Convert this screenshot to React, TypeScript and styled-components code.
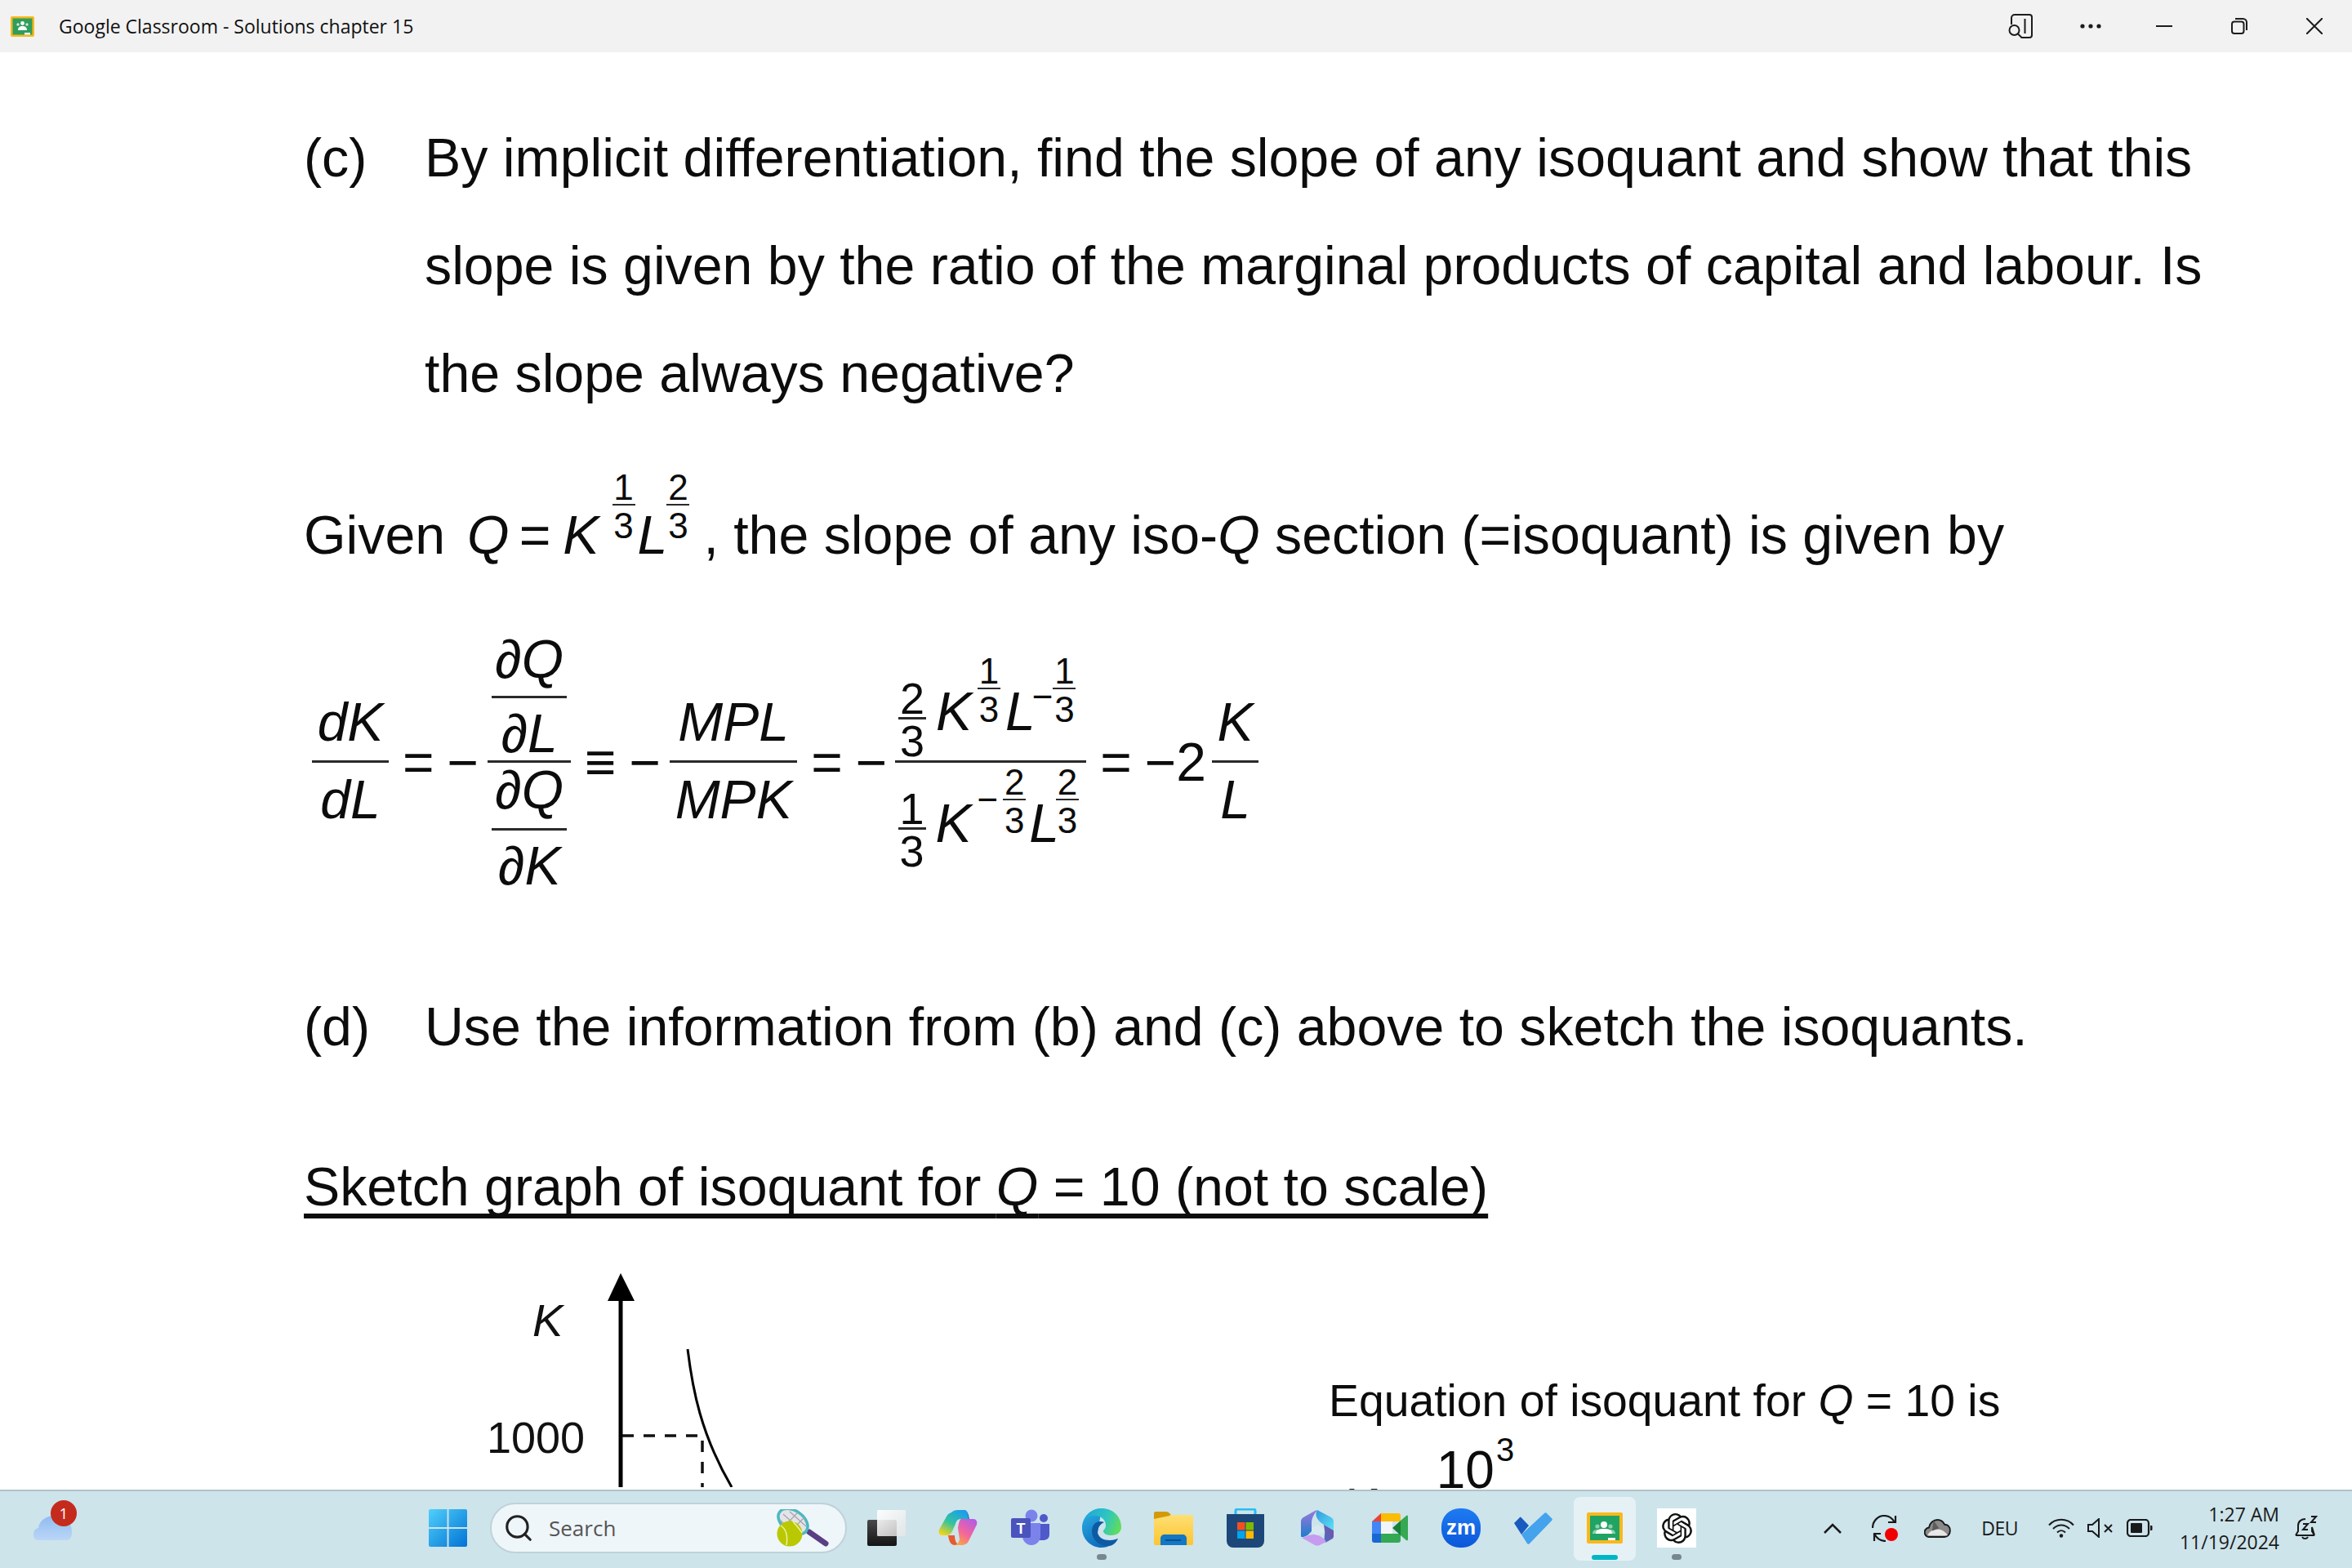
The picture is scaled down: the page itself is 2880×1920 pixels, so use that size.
import * as React from "react";
import styled, { createGlobalStyle } from "styled-components";
import { Search } from "lucide-react";
import { SiOpenai } from "react-icons/si";

const GlobalStyle = createGlobalStyle`
  html, body { margin: 0; padding: 0; background: #fff; }
  #root { width: 2880px; height: 1920px; }
`;

const Page = styled.div`
  width: 2880px;
  height: 1920px;
  display: flex;
  flex-direction: column;
  overflow: hidden;
  font-family: "Liberation Sans", Arial, sans-serif;
  color: #0c0c0c;
`;

/* title bar */
const TitleBar = styled.header`
  height: 64px;
  flex: none;
  background: #f2f2f2;
  display: flex;
  align-items: center;
  padding: 0 36px 0 13px;
  font-family: "Open Sans", sans-serif;
`;

const AppTitle = styled.span`
  margin-left: 30px;
  font-size: 23px;
  color: #111;
`;

const WindowControls = styled.div`
  margin-left: auto;
  display: flex;
  align-items: center;
`;

const WinButton = styled.span<{ $ml: number }>`
  margin-left: ${(p) => p.$ml}px;
  display: flex;
`;

/* document */
const Sheet = styled.main`
  flex: 1;
  min-height: 0;
  overflow: hidden;
  background: #fff;
  padding: 63px 0 0 372px;
  font-size: 66.25px;
`;

const Question = styled.section<{ $mt?: number }>`
  display: grid;
  grid-template-columns: 148px auto;
  margin-top: ${(p) => p.$mt ?? 0}px;
  line-height: 132px;
  white-space: nowrap;
`;

const QuestionLine = styled.div`
  height: 132px;
`;

const MathLine = styled.div<{ $mt: number }>`
  display: flex;
  align-items: flex-end;
  margin-top: ${(p) => p.$mt}px;
  font-size: 66.25px;
  line-height: 66px;
  white-space: pre;
`;

const Formula = styled.div<{ $mt: number }>`
  display: flex;
  align-items: center;
  margin: ${(p) => p.$mt}px 0 0 10px;
  font-size: 66px;
  line-height: 66px;
  white-space: pre;
`;

const Op = styled.span<{ $ml?: number }>`
  margin-left: ${(p) => p.$ml ?? 0}px;
  flex: none;
`;

const Var = styled.i<{ $ml?: number; $mb?: number }>`
  margin-left: ${(p) => p.$ml ?? 0}px;
  margin-bottom: ${(p) => p.$mb ?? 0}px;
  flex: none;
`;

const Plain = styled.span<{ $ml?: number; $mb?: number; $size?: number }>`
  margin-left: ${(p) => p.$ml ?? 0}px;
  margin-bottom: ${(p) => p.$mb ?? 0}px;
  ${(p) => (p.$size ? `font-size: ${p.$size}px; line-height: ${p.$size}px;` : "")}
  flex: none;
`;

const FracBox = styled.span<{
  $w: number;
  $size: number;
  $lh: number;
  $auto?: boolean;
  $ml?: number;
  $mb?: number;
}>`
  display: inline-grid;
  grid-template-rows: ${(p) => (p.$auto ? "auto auto auto" : "1fr auto 1fr")};
  width: ${(p) => p.$w}px;
  flex: none;
  font-size: ${(p) => p.$size}px;
  line-height: ${(p) => p.$lh}px;
  margin-left: ${(p) => p.$ml ?? 0}px;
  margin-bottom: ${(p) => p.$mb ?? 0}px;
`;

const FracNum = styled.span<{ $pad: number }>`
  display: flex;
  justify-content: center;
  align-items: flex-end;
  padding-bottom: ${(p) => p.$pad}px;
`;

const FracDen = styled.span<{ $pad: number }>`
  display: flex;
  justify-content: center;
  align-items: flex-start;
  padding-top: ${(p) => p.$pad}px;
`;

const FracBar = styled.span<{ $h: number }>`
  display: block;
  height: ${(p) => p.$h}px;
  background: #2a2a2a;
`;

const Stack = styled.span<{ $right: number }>`
  display: flex;
  align-items: flex-end;
  padding-right: ${(p) => p.$right}px;
`;

interface FracProps {
  num: React.ReactNode;
  den: React.ReactNode;
  w: number;
  size?: number;
  lh?: number;
  bar?: number;
  numPad?: number;
  denPad?: number;
  auto?: boolean;
  ml?: number;
  mb?: number;
}

const Frac = ({ num, den, w, size = 66, lh = 66, bar = 3, numPad = 14, denPad = 12, auto, ml, mb }: FracProps) => (
  <FracBox $w={w} $size={size} $lh={lh} $auto={auto} $ml={ml} $mb={mb}>
    <FracNum $pad={numPad}>{num}</FracNum>
    <FracBar $h={bar} />
    <FracDen $pad={denPad}>{den}</FracDen>
  </FracBox>
);

const Exp = ({ n, ml, mb }: { n: string; ml: number; mb: number }) => (
  <Frac num={n} den="3" w={28} size={44} lh={38} bar={2} numPad={1} denPad={6} ml={ml} mb={mb} />
);

const Coef = ({ n }: { n: string }) => (
  <Frac num={n} den="3" w={34} size={54} lh={46} bar={3} numPad={0} denPad={3} ml={-3} />
);

const Heading = styled.h2`
  margin: 97px 0 0;
  font-size: 66.3px;
  line-height: 66px;
  font-weight: 400;
  white-space: nowrap;
  text-decoration: underline;
  text-decoration-thickness: 6px;
  text-underline-offset: 10px;
  text-decoration-skip-ink: none;
`;

const GraphRow = styled.section`
  display: flex;
  margin-top: 65px;
  height: 400px;
`;

const GraphSvg = styled.svg`
  width: 1255px;
  height: 270px;
  flex: none;
  overflow: hidden;
`;

const Equation = styled.div`
  padding-top: 134px;
  font-size: 55.3px;
  line-height: 60px;
  white-space: nowrap;
`;

const EquationBody = styled.div`
  display: flex;
  align-items: flex-start;
  font-size: 64px;
  line-height: 62px;
`;

const EqPart = styled.span<{ $ml: number; $mt: number; $size?: number }>`
  margin: ${(p) => p.$mt}px 0 0 ${(p) => p.$ml}px;
  ${(p) => (p.$size ? `font-size: ${p.$size}px; line-height: ${p.$size}px;` : "")}
`;

/* task bar */
const TaskBar = styled.footer`
  height: 96px;
  flex: none;
  box-sizing: border-box;
  border-top: 2px solid #b1c2c8;
  background: #cde4eb;
  display: flex;
  align-items: center;
  padding: 0 42px 4px 41px;
  font-family: "Open Sans", sans-serif;
  color: #1a1a1a;
`;

const Weather = styled.div`
  position: relative;
  width: 47px;
  height: 30px;
  margin-right: 437px;
  flex: none;
`;

const Badge = styled.span`
  position: absolute;
  left: 21px;
  top: -19px;
  width: 32px;
  height: 32px;
  border-radius: 50%;
  background: #c42b1c;
  color: #fff;
  font-size: 19px;
  line-height: 32px;
  text-align: center;
`;

const SearchBox = styled.div`
  width: 437px;
  height: 62px;
  box-sizing: border-box;
  margin-left: 28px;
  flex: none;
  display: flex;
  align-items: center;
  padding: 0 18px 0 14px;
  background: #eff6f9;
  border: 2px solid #bfd2d9;
  border-radius: 31px;
  color: #222;
`;

const SearchLabel = styled.span`
  margin-left: 18px;
  font-size: 26px;
  color: #555;
  flex: 1;
`;

const Slots = styled.div`
  display: flex;
  margin-left: 4px;
`;

const Slot = styled.div<{ $active?: boolean }>`
  position: relative;
  width: 88px;
  height: 92px;
  display: flex;
  align-items: center;
  justify-content: center;
  &::before {
    content: "";
    display: ${(p) => (p.$active ? "block" : "none")};
    position: absolute;
    left: 6px;
    top: 8px;
    width: 76px;
    height: 78px;
    background: #e6f1f6;
    border-radius: 8px;
  }
`;

const SlotIcon = styled.svg`
  position: relative;
  width: 48px;
  height: 48px;
  display: block;
`;

const RunDot = styled.span`
  position: absolute;
  left: 38px;
  top: 78px;
  width: 12px;
  height: 7px;
  border-radius: 4px;
  background: #78878d;
`;

const ActiveBar = styled.span`
  position: absolute;
  left: 28px;
  top: 79px;
  width: 32px;
  height: 6px;
  border-radius: 3px;
  background: #00b6c5;
`;

const ZoomMark = styled.div`
  position: relative;
  width: 48px;
  height: 48px;
  border-radius: 46%;
  background: linear-gradient(#1f7bf2, #0b57d9);
  color: #fff;
  font-family: "Liberation Sans", sans-serif;
  font-size: 26px;
  font-weight: 700;
  line-height: 46px;
  text-align: center;
`;

const GptTile = styled.div`
  width: 48px;
  height: 48px;
  background: #fff;
  color: #111;
  display: flex;
  align-items: center;
  justify-content: center;
  font-size: 37px;
`;

const Tray = styled.div`
  margin-left: auto;
  display: flex;
  align-items: center;
`;

const TrayItem = styled.span<{ $ml: number }>`
  margin-left: ${(p) => p.$ml}px;
  display: flex;
`;

const TrayText = styled.span<{ $ml: number }>`
  margin-left: ${(p) => p.$ml}px;
  font-size: 23px;
  letter-spacing: -0.5px;
  line-height: 30px;
`;

const Clock = styled.div`
  width: 155px;
  text-align: right;
  font-size: 23px;
  line-height: 34px;
`;

const TitleLogo = () => (
  <svg width="29" height="25" viewBox="0 0 29 25">
    <rect width="29" height="25" rx="2" fill="#f9b81a" />
    <rect x="2.5" y="2.5" width="24" height="20" fill="#2f9e5c" />
    <circle cx="14.5" cy="8.5" r="2.4" fill="#fff" />
    <circle cx="9" cy="10" r="1.7" fill="#cfe8d8" />
    <circle cx="20" cy="10" r="1.7" fill="#cfe8d8" />
    <path d="M9 17c0-3.5 2-5 5.5-5s5.5 1.5 5.5 5z" fill="#fff" />
    <rect x="17" y="20" width="7" height="2.5" fill="#fff" />
  </svg>
);

const icon = { fill: "none", stroke: "#1c1c1c", strokeWidth: 2 };

const FindIcon = () => (
  <svg width="32" height="32" viewBox="0 0 32 32" {...icon}>
    <path d="M5 14V6a4 4 0 0 1 4-4h18a3 3 0 0 1 3 3v22a3 3 0 0 1-3 3H17" />
    <path d="M21.5 7v18" />
    <circle cx="8.5" cy="21" r="6" />
    <path d="M13 25.5l4.5 4.5" />
  </svg>
);

const DotsIcon = () => (
  <svg width="26" height="6" viewBox="0 0 26 6" fill="#1c1c1c">
    <circle cx="3" cy="3" r="2.6" />
    <circle cx="13" cy="3" r="2.6" />
    <circle cx="23" cy="3" r="2.6" />
  </svg>
);

const MinimizeIcon = () => (
  <svg width="20" height="20" viewBox="0 0 20 20" {...icon}>
    <path d="M0 10h20" />
  </svg>
);

const RestoreIcon = () => (
  <svg width="20" height="20" viewBox="0 0 20 20" {...icon}>
    <rect x="1" y="4.5" width="14.5" height="14.5" rx="3" />
    <path d="M5 1h9.5A4.5 4.5 0 0 1 19 5.5V15" />
  </svg>
);

const CloseIcon = () => (
  <svg width="20" height="20" viewBox="0 0 20 20" {...icon}>
    <path d="M0 0l20 20M20 0L0 20" />
  </svg>
);

const CloudIcon = () => (
  <svg width="47" height="30" viewBox="0 0 47 30">
    <defs>
      <linearGradient id="cloud" x1="0" y1="0" x2="0" y2="1">
        <stop offset="0" stopColor="#8fbcf0" />
        <stop offset="1" stopColor="#bcd6f7" />
      </linearGradient>
    </defs>
    <path d="M6 30a6 6 0 0 1-6-7c0-4 2-7 6-8 1-8 8-15 20-15 12 0 21 7 21 20 0 4-1 10-6 10z" fill="url(#cloud)" />
  </svg>
);

const StartIcon = () => (
  <svg width="47" height="46" viewBox="0 0 47 46">
    <defs>
      <linearGradient id="win" x1="0" y1="0" x2="1" y2="1">
        <stop offset="0" stopColor="#4fd0fb" />
        <stop offset="1" stopColor="#0272d4" />
      </linearGradient>
    </defs>
    <path d="M2 0h20.5v22H0V2a2 2 0 0 1 2-2zM24.5 0H45a2 2 0 0 1 2 2v20H24.5zM0 24h22.5v22H2a2 2 0 0 1-2-2zM24.5 24H47v20a2 2 0 0 1-2 2H24.5z" fill="url(#win)" />
  </svg>
);

const RacketIcon = () => (
  <svg width="68" height="46" viewBox="0 0 68 46">
    <path d="M42 28l20 14" stroke="#5a3f84" strokeWidth="7" strokeLinecap="round" />
    <ellipse cx="22" cy="15" rx="20" ry="13" transform="rotate(35 22 15)" fill="#e4e4e8" stroke="#4cb8c0" strokeWidth="3.5" />
    <path d="M10 6l22 20M18 3l20 18M6 13l20 20M10 22L28 4M18 28L36 10" stroke="#a4a4ae" strokeWidth="1.2" />
    <circle cx="18" cy="30" r="15.5" fill="#b9c800" />
    <path d="M7 20c6 4 9 12 7 24M22 15c4 5 8 9 11 14" stroke="#eef2a8" strokeWidth="1.5" fill="none" />
  </svg>
);

const TaskViewIcon = () => (
  <SlotIcon viewBox="0 0 48 48">
    <defs>
      <linearGradient id="tv" x1="0" y1="0" x2="0" y2="1">
        <stop offset="0" stopColor="#4a4a4a" />
        <stop offset="1" stopColor="#141414" />
      </linearGradient>
      <linearGradient id="tw" x1="0" y1="0" x2="1" y2="1">
        <stop offset="0" stopColor="#ffffff" stopOpacity="0.95" />
        <stop offset="1" stopColor="#e6e6e6" stopOpacity="0.75" />
      </linearGradient>
    </defs>
    <rect x="1" y="14" width="36" height="32" rx="2" fill="url(#tv)" />
    <rect x="13" y="2" width="36" height="32" rx="1.5" fill="url(#tw)" />
  </SlotIcon>
);

const CopilotIcon = () => (
  <SlotIcon viewBox="0 0 48 48">
    <defs>
      <linearGradient id="cpa" x1="0.8" y1="0" x2="0.2" y2="1">
        <stop offset="0" stopColor="#1a9cf0" />
        <stop offset="0.55" stopColor="#35c49c" />
        <stop offset="1" stopColor="#f2d31a" />
      </linearGradient>
      <linearGradient id="cpb" x1="0.8" y1="0" x2="0.2" y2="1">
        <stop offset="0" stopColor="#b45be5" />
        <stop offset="0.55" stopColor="#f4669a" />
        <stop offset="1" stopColor="#f9a840" />
      </linearGradient>
    </defs>
    <path d="M12 33c1 7 3 12 8 12h6c-4-1-6-6-6-12z" fill="#e85a30" />
    <path d="M31 2c4 0 6 4 7 12h-6z" fill="#1656c0" />
    <path d="M16 5c2-2 4-3 8-3h7c4 0 5 3 6 11h-9c-4 0-6 2-7 6l-4 9c-2 4-4 5-8 5H5c-4 0-5-3-4-7l9-16c2-4 4-4 6-5z" fill="url(#cpa)" />
    <path d="M28 13h15c4 0 5 4 4 7l-9 18c-2 5-5 7-10 7h-9c4 0 6-3 7-7l-2-14c1-6 2-11 4-11z" fill="url(#cpb)" />
  </SlotIcon>
);

const TeamsIcon = () => (
  <SlotIcon viewBox="0 0 48 48">
    <circle cx="41" cy="12" r="5" fill="#5059c9" />
    <path d="M35 19h13v13c0 5-4 7-8 7h-5z" fill="#5059c9" />
    <circle cx="26" cy="9" r="7.5" fill="#7b83eb" />
    <path d="M15 18h22v16c0 6-5 11-11 11s-11-5-11-11z" fill="#7b83eb" />
    <rect x="1" y="12" width="24" height="24" rx="2" fill="#4b53bc" />
    <text x="13" y="31" fontFamily="Liberation Sans" fontWeight="700" fontSize="18" fill="#fff" textAnchor="middle">T</text>
  </SlotIcon>
);

const EdgeIcon = () => (
  <SlotIcon viewBox="0 0 48 48">
    <defs>
      <linearGradient id="eda" x1="0" y1="0.3" x2="1" y2="0.6">
        <stop offset="0" stopColor="#1fa9d9" />
        <stop offset="0.55" stopColor="#2dc5c0" />
        <stop offset="1" stopColor="#62dd5a" />
      </linearGradient>
      <linearGradient id="edb" x1="0" y1="0" x2="0.6" y2="1">
        <stop offset="0" stopColor="#2fb4e8" />
        <stop offset="1" stopColor="#0a66b8" />
      </linearGradient>
    </defs>
    <path d="M24 0C10 0 0 11 0 24c0 14 11 24 24 24 8 0 15-4 20-11-3 1-6 2-10 2-8 0-14-3-15-9z" fill="url(#edb)" />
    <path d="M3 14C7 5 15 0 24 0c14 0 24 10 24 23 0 6-5 10-12 10-5 0-10-2-10-5 0-2 3-3 3-7C29 13 22 9 16 9 10 9 6 11 3 14z" fill="url(#eda)" />
    <path d="M19 30c0-6 3-11 8-13-7-3-15 1-15 11 0 10 8 18 20 18 5 0 9-3 12-9-8 4-22 4-25-7z" fill="#0d5aa3" />
  </SlotIcon>
);

const FolderIcon = () => (
  <SlotIcon viewBox="0 0 48 48">
    <defs>
      <linearGradient id="fol" x1="0" y1="0" x2="0" y2="1">
        <stop offset="0" stopColor="#fedf74" />
        <stop offset="1" stopColor="#fdc530" />
      </linearGradient>
    </defs>
    <path d="M0 6a2 2 0 0 1 2-2h13c2 0 3 1 4 2l3 3v4H0z" fill="#d39a06" />
    <path d="M0 13l19-4 1-1h26a2 2 0 0 1 2 2v33a2 2 0 0 1-2 2H2a2 2 0 0 1-2-2z" fill="url(#fol)" />
    <path d="M8 45V37c0-3 2-5 5-5h22c3 0 5 2 5 5v8z" fill="#1277c4" />
    <rect x="14" y="38" width="19" height="2" fill="#0b4f8a" />
  </SlotIcon>
);

const StoreIcon = () => (
  <SlotIcon viewBox="0 0 48 48">
    <path d="M12 10V3a2 2 0 0 1 2-2h20a2 2 0 0 1 2 2v7" fill="none" stroke="#28bdf2" strokeWidth="3" />
    <path d="M1 7h46v33a8 8 0 0 1-8 8H9a8 8 0 0 1-8-8z" fill="#1c4778" />
    <rect x="14" y="17" width="9.5" height="9.5" fill="#f25022" />
    <rect x="24.5" y="17" width="9.5" height="9.5" fill="#7fba00" />
    <rect x="14" y="27.5" width="9.5" height="9.5" fill="#00a4ef" />
    <rect x="24.5" y="27.5" width="9.5" height="9.5" fill="#ffb900" />
  </SlotIcon>
);

const M365Icon = () => (
  <SlotIcon viewBox="0 0 48 48">
    <defs>
      <linearGradient id="msa" x1="0.5" y1="0" x2="0.5" y2="1">
        <stop offset="0" stopColor="#9b78dc" />
        <stop offset="1" stopColor="#1f7ecb" />
      </linearGradient>
      <linearGradient id="msb" x1="0" y1="0" x2="1" y2="1">
        <stop offset="0" stopColor="#3498dc" />
        <stop offset="1" stopColor="#5be4f7" />
      </linearGradient>
      <linearGradient id="msc" x1="1" y1="0" x2="0" y2="1">
        <stop offset="0" stopColor="#7a4fa8" />
        <stop offset="1" stopColor="#4a6fc0" />
      </linearGradient>
    </defs>
    <path d="M21 3L7 11c-2 1-3 3-3 5v18c0 2 4 1 8-1l5-5V18c0-6 3-11 7-16z" fill="url(#msa)" />
    <path d="M24 2l17 9c2 1 3 3 3 5v11L32 20C24 15 20 8 24 2z" fill="url(#msb)" />
    <path d="M32 20l12 7v7c0 2-1 3-3 4l-7 4c-3-4 0-10-1-15z" fill="url(#msc)" />
    <path d="M5 36l16 9c2 1 4 1 6 0l8-4c-3-5-9-9-15-9-6 0-11 3-15 4z" fill="#c59cf0" />
    <path d="M24 20l8 4v5l-8 4-7-4v-5z" fill="#d6e9ef" />
  </SlotIcon>
);

const MeetIcon = () => (
  <SlotIcon viewBox="0 0 48 48">
    <path d="M14 6v10H3z" fill="#ea4335" />
    <path d="M14 6h21a3 3 0 0 1 3 3v7H14z" fill="#fbbc04" />
    <rect x="3" y="16" width="11" height="15" fill="#4285f4" />
    <rect x="14" y="16" width="14" height="15" fill="#f1f5f8" />
    <path d="M3 31h11v11H6a3 3 0 0 1-3-3z" fill="#1967d2" />
    <path d="M14 31h24v8a3 3 0 0 1-3 3H14z" fill="#34a853" />
    <path d="M28 24l10-9v18z" fill="#188038" />
    <path d="M38 15l7-6c1-1 2 0 2 1v28c0 1-1 2-2 1l-7-6z" fill="#34a853" />
  </SlotIcon>
);

const TodoIcon = () => (
  <SlotIcon viewBox="0 0 48 48">
    <path d="M1 18l7-7a1 1 0 0 1 1.5 0L19 21l-9 11z" fill="#185abd" />
    <path d="M10 32L38 6a2 2 0 0 1 3 0l6 6a2 2 0 0 1 0 3L20 43a2 2 0 0 1-3 0z" fill="#45a2ec" />
  </SlotIcon>
);

const ClassroomIcon = () => (
  <SlotIcon viewBox="0 0 48 48">
    <rect x="2" y="5" width="44" height="38" rx="2" fill="#f9b81a" />
    <rect x="6" y="9" width="36" height="30" fill="#1fa463" />
    <circle cx="23" cy="20" r="4" fill="#fff" />
    <circle cx="15" cy="22" r="2.6" fill="#8fd1ad" />
    <circle cx="31" cy="22" r="2.6" fill="#8fd1ad" />
    <path d="M9 31c0-4 3-5 6-5s6 1 6 5zM25 31c0-4 3-5 6-5s6 1 6 5z" fill="#8fd1ad" />
    <path d="M13 31c0-5 4-6 10-6s10 1 10 6z" fill="#fff" />
    <rect x="28" y="36" width="9" height="3" fill="#fff" />
  </SlotIcon>
);

const ChevronIcon = () => (
  <svg width="22" height="13" viewBox="0 0 22 13" fill="none" stroke="#1a1a1a" strokeWidth="2.5">
    <path d="M1 12L11 2l10 10" />
  </svg>
);

const SyncIcon = () => (
  <svg width="32" height="33" viewBox="0 0 32 33" fill="none" stroke="#1a1a1a" strokeWidth="2.2">
    <path d="M1 16C1 7 8 1 15 1c6 0 10 3 13 8" />
    <path d="M29 1v8h-9" />
    <path d="M3 32v-9h8" />
    <path d="M3 23c3 6 8 9 14 9" />
    <circle cx="24" cy="24" r="8" fill="#f00000" stroke="none" />
  </svg>
);

const OneDriveIcon = () => (
  <svg width="33" height="23" viewBox="0 0 34 24">
    <path d="M7 23a6 6 0 0 1-1-12c1-6 6-10 11-10 4 0 7 2 9 6 4 0 7 3 7 8 0 4-3 8-7 8z" fill="#8a8a8a" stroke="#1a1a1a" strokeWidth="2" />
    <path d="M4 21c3-6 8-8 13-8 5 0 10 3 13 8z" fill="#e8e8e8" />
    <path d="M12 2l7 10-9 3z" fill="#5c5c5c" />
  </svg>
);

const WifiIcon = () => (
  <svg width="32" height="24" viewBox="0 0 32 24" fill="none" stroke="#1a1a1a" strokeWidth="2">
    <path d="M1 8.5C9-.5 23-.5 31 8.5" />
    <path d="M6 13c6-6 14-6 20 0" />
    <path d="M11 17.5c3-3 7-3 10 0" />
    <circle cx="16" cy="21.5" r="2.2" fill="#1a1a1a" stroke="none" />
  </svg>
);

const MuteIcon = () => (
  <svg width="32" height="24" viewBox="0 0 32 24" fill="none" stroke="#1a1a1a" strokeWidth="2">
    <path d="M1 8h5l8-7v22l-8-7H1z" />
    <path d="M21 8l9 9M30 8l-9 9" />
  </svg>
);

const BatteryIcon = () => (
  <svg width="32" height="22" viewBox="0 0 32 22" fill="none" stroke="#1a1a1a" strokeWidth="2.2">
    <rect x="1" y="1" width="26" height="20" rx="4" />
    <rect x="5" y="5" width="14" height="12" rx="1" fill="#1a1a1a" stroke="none" />
    <path d="M29 8h1.5a1 1 0 0 1 1 1v4a1 1 0 0 1-1 1H29z" fill="#1a1a1a" stroke="none" />
  </svg>
);

const SnoozeIcon = () => (
  <svg width="28" height="30" viewBox="0 0 28 30" fill="none" stroke="#1a1a1a" strokeWidth="2">
    <path d="M1 24l3-5v-7C4 7 8 4 13 4M21 14v5l3 5z" />
    <path d="M1 24h23" />
    <path d="M9 26a4 4 0 0 0 7 0" />
    <path d="M20 1h6l-6 7h6M10 10h6l-6 7h6" />
  </svg>
);

const App = () => (
  <Page>
    <GlobalStyle />
    <TitleBar>
      <TitleLogo />
      <AppTitle>Google Classroom - Solutions chapter 15</AppTitle>
      <WindowControls>
        <WinButton $ml={0}><FindIcon /></WinButton>
        <WinButton $ml={57}><DotsIcon /></WinButton>
        <WinButton $ml={67}><MinimizeIcon /></WinButton>
        <WinButton $ml={72}><RestoreIcon /></WinButton>
        <WinButton $ml={72}><CloseIcon /></WinButton>
      </WindowControls>
    </TitleBar>

    <Sheet>
      <Question>
        <span>(c)</span>
        <div>
          <QuestionLine>By implicit differentiation, find the slope of any isoquant and show that this</QuestionLine>
          <QuestionLine>slope is given by the ratio of the marginal products of capital and labour. Is</QuestionLine>
          <QuestionLine>the slope always negative?</QuestionLine>
        </div>
      </Question>

      <MathLine $mt={50}>
        <Plain>Given</Plain>
        <Var $ml={27}>Q</Var>
        <Op $ml={12}>=</Op>
        <Var $ml={15}>K</Var>
        <Exp n="1" ml={16} mb={25} />
        <Var $ml={3}>L</Var>
        <Exp n="2" ml={-1} mb={25} />
        <Plain $ml={17}>, the slope of any iso-</Plain>
        <Var>Q</Var>
        <Plain> section (=isoquant) is given by</Plain>
      </MathLine>

      <Formula $mt={84}>
        <Frac w={94} num={<i>dK</i>} den={<i>dL</i>} />
        <Op $ml={17}>=</Op>
        <Op $ml={16}>−</Op>
        <Frac
          w={102}
          ml={11}
          numPad={0}
          denPad={0}
          num={<Frac auto w={92} numPad={12} denPad={10} num={<i>∂Q</i>} den={<i>∂L</i>} />}
          den={<Frac auto w={92} numPad={14} denPad={10} num={<i>∂Q</i>} den={<i>∂K</i>} />}
        />
        <Op $ml={17}>≡</Op>
        <Op $ml={16}>−</Op>
        <Frac w={156} ml={11} num={<i>MPL</i>} den={<i>MPK</i>} />
        <Op $ml={17}>=</Op>
        <Op $ml={16}>−</Op>
        <Frac
          w={234}
          ml={10}
          numPad={1}
          denPad={0}
          num={
            <Stack $right={6}>
              <Coef n="2" />
              <Var $ml={12} $mb={26}>K</Var>
              <Exp n="1" ml={7} mb={42} />
              <Var $ml={6} $mb={26}>L</Var>
              <Plain $ml={-4} $mb={55} $size={44}>−</Plain>
              <Exp n="1" ml={0} mb={42} />
            </Stack>
          }
          den={
            <Stack $right={3}>
              <Coef n="1" />
              <Var $ml={12} $mb={24}>K</Var>
              <Plain $ml={7} $mb={64} $size={44}>−</Plain>
              <Exp n="2" ml={6} mb={41} />
              <Var $ml={4} $mb={24}>L</Var>
              <Exp n="2" ml={-4} mb={41} />
            </Stack>
          }
        />
        <Op $ml={17}>=</Op>
        <Op $ml={16}>−</Op>
        <Op>2</Op>
        <Frac w={57} ml={7} num={<i>K</i>} den={<i>L</i>} />
      </Formula>

      <Question $mt={98}>
        <span>(d)</span>
        <QuestionLine>Use the information from (b) and (c) above to sketch the isoquants.</QuestionLine>
      </Question>

      <Heading>
        Sketch graph of isoquant for <i>Q</i> = 10 (not to scale)
      </Heading>

      <GraphRow>
        <GraphSvg viewBox="0 0 1255 270">
          <path d="M388 42V270" stroke="#000" strokeWidth="5" />
          <path d="M372 42L388 8l17 34z" fill="#000" />
          <text x="280" y="85" fontFamily="Liberation Sans" fontStyle="italic" fontSize="56" fill="#111">K</text>
          <text x="224" y="228" fontFamily="Liberation Sans" fontSize="54" fill="#111">1000</text>
          <path d="M470 101C476 150 486 205 524 270" fill="none" stroke="#000" strokeWidth="3" />
          <path d="M390 207H488V270" fill="none" stroke="#111" strokeWidth="3.5" strokeDasharray="14 12" />
        </GraphSvg>
        <Equation>
          <div>
            Equation of isoquant for <i>Q</i> = 10 is
          </div>
          <EquationBody>
            <EqPart $ml={15} $mt={70}><i>K</i></EqPart>
            <EqPart $ml={74} $mt={24}>10</EqPart>
            <EqPart $ml={2} $mt={10} $size={40}>3</EqPart>
          </EquationBody>
        </Equation>
      </GraphRow>
    </Sheet>

    <TaskBar>
      <Weather>
        <CloudIcon />
        <Badge>1</Badge>
      </Weather>
      <StartIcon />
      <SearchBox>
        <Search size={38} strokeWidth={2} />
        <SearchLabel>Search</SearchLabel>
        <RacketIcon />
      </SearchBox>
      <Slots>
        <Slot><TaskViewIcon /></Slot>
        <Slot><CopilotIcon /></Slot>
        <Slot><TeamsIcon /></Slot>
        <Slot><EdgeIcon /><RunDot /></Slot>
        <Slot><FolderIcon /></Slot>
        <Slot><StoreIcon /></Slot>
        <Slot><M365Icon /></Slot>
        <Slot><MeetIcon /></Slot>
        <Slot><ZoomMark>zm</ZoomMark></Slot>
        <Slot><TodoIcon /></Slot>
        <Slot $active><ClassroomIcon /><ActiveBar /></Slot>
        <Slot><GptTile><SiOpenai /></GptTile><RunDot /></Slot>
      </Slots>
      <Tray>
        <TrayItem $ml={0}><ChevronIcon /></TrayItem>
        <TrayItem $ml={37}><SyncIcon /></TrayItem>
        <TrayItem $ml={32}><OneDriveIcon /></TrayItem>
        <TrayText $ml={37}>DEU</TrayText>
        <TrayItem $ml={37}><WifiIcon /></TrayItem>
        <TrayItem $ml={16}><MuteIcon /></TrayItem>
        <TrayItem $ml={16}><BatteryIcon /></TrayItem>
        <Clock>
          <div>1:27 AM</div>
          <div>11/19/2024</div>
        </Clock>
        <TrayItem $ml={19}><SnoozeIcon /></TrayItem>
      </Tray>
    </TaskBar>
  </Page>
);

export default App;
